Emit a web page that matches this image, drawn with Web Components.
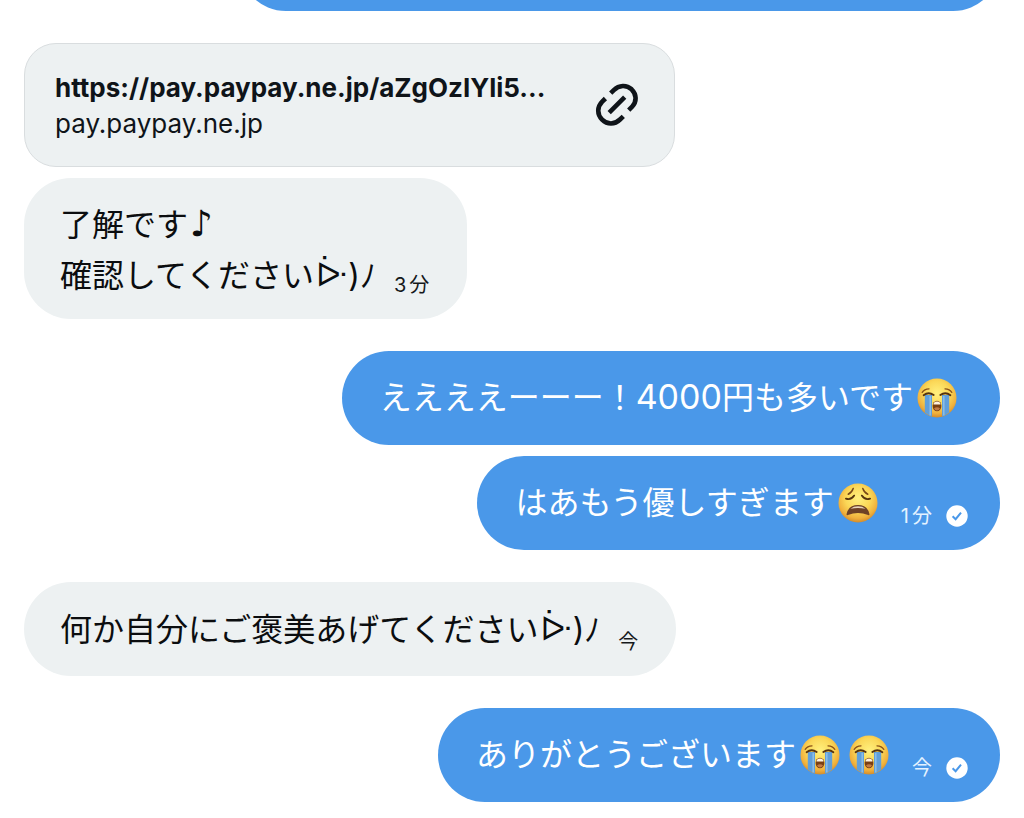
<!DOCTYPE html>
<html lang="ja">
<head>
<meta charset="utf-8">
<meta name="viewport" content="width=device-width, initial-scale=1">
<title>Messages</title>
<style>
  body { margin: 0; background: #fff; font-family: Inter, "Noto Sans CJK JP", "DejaVu Sans", sans-serif; }
  .kaomoji { line-height: 52px; margin-left: 2px; }
  .note { font-family: "DejaVu Sans", sans-serif; font-size: 36px; line-height: 40px; margin-left: 2px; }
  .number { font-size: 34px; line-height: 40px; }
  .minutes { margin-right: 3px; }
</style>
</head>
<body>
<chat-thread>
  <chat-group side="out">
    <chat-bubble side="out" wide></chat-bubble>
  </chat-group>
  <chat-group>
    <link-card href="https://pay.paypay.ne.jp/">
      <span slot="title">https://pay.paypay.ne.jp/aZgOzIYli5...</span>
      <span slot="domain">pay.paypay.ne.jp</span>
    </link-card>
    <chat-bubble>了解です<span class="note">♪</span><br>確認してください<span class="kaomoji">ᐕ)ﾉ</span><chat-meta slot="meta"><span class="minutes">3</span>分</chat-meta></chat-bubble>
  </chat-group>
  <chat-group side="out">
    <chat-bubble side="out">ええええーーー！<span class="number">4000</span>円も多いです<chat-emoji name="sob"></chat-emoji></chat-bubble>
    <chat-bubble side="out" read>はあもう優しすぎます<chat-emoji name="weary"></chat-emoji><chat-meta slot="meta" read><span class="minutes">1</span>分</chat-meta></chat-bubble>
  </chat-group>
  <chat-group>
    <chat-bubble>何か自分にご褒美あげてください<span class="kaomoji">ᐕ)ﾉ</span><chat-meta slot="meta">今</chat-meta></chat-bubble>
  </chat-group>
  <chat-group side="out">
    <chat-bubble side="out" read>ありがとうございます<chat-emoji name="sob"></chat-emoji><chat-emoji name="sob"></chat-emoji><chat-meta slot="meta" read>今</chat-meta></chat-bubble>
  </chat-group>
</chat-thread>

<script>
class BaseElement extends HTMLElement {
  constructor() {
    super();
    this.attachShadow({ mode: 'open' });
  }
  connectedCallback() {
    this.shadowRoot.innerHTML = this.render();
  }
}

customElements.define('chat-thread', class extends BaseElement {
  render() {
    return `<style>
      :host { display: block; overflow: hidden; }
      /* The thread is scrolled: the oldest bubble is mostly above the window. */
      main { display: flex; flex-direction: column; gap: 32px; margin-top: -83px; padding: 0 24px 16px; }
    </style><main><slot></slot></main>`;
  }
});

customElements.define('chat-group', class extends BaseElement {
  render() {
    return `<style>
      :host { display: flex; flex-direction: column; align-items: flex-start; gap: 11px; }
      :host([side="out"]) { align-items: flex-end; }
    </style><slot></slot>`;
  }
});

customElements.define('chat-bubble', class extends BaseElement {
  render() {
    return `<style>
      :host {
        display: flex; align-items: flex-end; gap: 18px; box-sizing: border-box;
        min-height: 94px; max-width: 100%; padding: 22px 38px 17px 36px; border-radius: 47px;
        background: #edf1f2; color: #0b0d0f; font-size: 32px; line-height: 50px;
      }
      :host([side="out"]) { padding: 22px 38px; background: #4a98e9; color: #fff; }
      :host([side="out"][read]) { padding-right: 32px; }
      :host([wide]) { width: 78%; }
      .text { align-self: flex-start; }
    </style><div class="text"><slot></slot></div><slot name="meta"></slot>`;
  }
});

customElements.define('chat-meta', class extends BaseElement {
  render() {
    const check = this.hasAttribute('read')
      ? `<svg width="22" height="22" viewBox="0 0 22 22" role="img" aria-label="既読">
           <circle cx="11" cy="11" r="10.7" fill="#fff"/>
           <path d="M6.6 11.3l3 2.9 5.4-6.6" fill="none" stroke="#4a98e9" stroke-width="2"/>
         </svg>` : '';
    return `<style>
      :host { display: flex; align-items: center; gap: 14px; height: 24px; margin-bottom: 5px;
        font-size: 20px; line-height: 24px; white-space: nowrap; color: #15191c; }
      :host([read]) { margin-bottom: 0; color: #e4f2ff; }
      svg { display: block; }
    </style><span><slot></slot></span>${check}`;
  }
});

customElements.define('link-card', class extends BaseElement {
  render() {
    return `<style>
      :host { display: block; width: 651px; max-width: 100%; }
      a { display: flex; align-items: center; justify-content: space-between; box-sizing: border-box;
        min-height: 124px; padding: 0 35px 0 30px; border: 1px solid #d9dddf; border-radius: 32px;
        background: #edf1f2; color: #0f1419; text-decoration: none; font-size: 26px; line-height: 36px; }
      .title, .domain { display: block; white-space: nowrap; }
      .title { font-weight: 700; }
      .text { min-width: 0; overflow: hidden; padding-top: 2px; }
      svg { flex: none; display: block; }
    </style>
    <a href="${this.getAttribute('href')}">
      <span class="text"><span class="title"><slot name="title"></slot></span><span class="domain"><slot name="domain"></slot></span></span>
      <svg width="44" height="44" viewBox="0 0 44 44" fill="none" stroke="#0f1419" stroke-width="4.6" aria-hidden="true">
        <path d="M15.7 10.2L18.8 7.1C24 1.9 31.6 1.7 36.6 6.3C41.8 11.4 42 18.6 36.9 24L33.7 27.2"/>
        <path d="M10.4 15.5L7.2 18.7C1.9 24.1 2 31.5 7.1 36.6C12.2 41.7 19.7 41.8 25 36.5L28.3 33.3"/>
        <path d="M14.2 29.7L29.7 14.2"/>
      </svg>
    </a>`;
  }
});

const FACES = {
  sob: {
    label: '大泣き',
    art: `
      <path d="M7.8 17H15V38.6Q10.8 37.2 7.8 34.6Z" fill="#609fdb"/>
      <path d="M25 17h7.2v17.6q-3 2.6-7.2 4Z" fill="#609fdb"/>
      <path d="M13.2 18v19.5M26.8 18v19.5" stroke="#8fc0e8" stroke-width="1.4"/>
      <path d="M5.2 14.4Q7.2 11.2 12 10.9M34.8 14.4Q32.8 11.2 28 10.9" fill="none" stroke="#8c5118" stroke-width="1.3" stroke-linecap="round"/>
      <path d="M6.6 17.2Q11.5 13.4 16.7 17M23.3 17Q28.5 13.4 33.4 17.2" fill="none" stroke="#55320f" stroke-width="1.8" stroke-linecap="round"/>
      <ellipse cx="20" cy="28" rx="4.4" ry="5.2" fill="#7a3f12"/>
      <path d="M16.4 26.4Q16.8 23.4 20 23.4t3.6 3Z" fill="#fff3de"/>
      <path d="M17 30.2Q20 28.4 23 30.2 22.2 32.5 20 32.5T17 30.2Z" fill="#c27a45"/>`
  },
  weary: {
    label: '疲れた顔',
    art: `
      <path d="M10.2 11.2Q13.8 9.5 15.2 5.4M29.8 11.2Q26.2 9.5 24.8 5.4" fill="none" stroke="#774818" stroke-width="1.5" stroke-linecap="round"/>
      <path d="M7.9 15.6Q13 17.4 16.2 12.6M32.1 15.6Q27 17.4 23.8 12.6" fill="none" stroke="#57350f" stroke-width="1.8" stroke-linecap="round"/>
      <path d="M8.6 31Q10.5 22 20 22t11.4 9q.3 1.8-1.3 1.1Q20 27.8 9.9 32.1 8.3 32.8 8.6 31Z" fill="#6e4126"/>
      <path d="M12.6 25.7Q15.5 23.3 20 23.3t7.4 2.4Q20 24.5 12.6 25.7Z" fill="#e9d5bc"/>`
  }
};

customElements.define('chat-emoji', class extends BaseElement {
  render() {
    const face = FACES[this.getAttribute('name')];
    return `<style>
      :host { display: inline-block; width: 40px; height: 40px; margin: 0 5px 0 4px; vertical-align: -9px; line-height: 0; }
      svg { display: block; }
    </style>
    <svg width="40" height="40" viewBox="0 0 40 40" role="img" aria-label="${face.label}">
      <defs>
        <radialGradient id="skin" cx="50%" cy="38%" r="64%">
          <stop offset="0" stop-color="#fff07e"/>
          <stop offset=".5" stop-color="#fbd757"/>
          <stop offset=".8" stop-color="#f0b03c"/>
          <stop offset="1" stop-color="#cd8428"/>
        </radialGradient>
      </defs>
      <circle cx="20" cy="20" r="19.5" fill="url(#skin)"/>${face.art}
    </svg>`;
  }
});
</script>
</body>
</html>
